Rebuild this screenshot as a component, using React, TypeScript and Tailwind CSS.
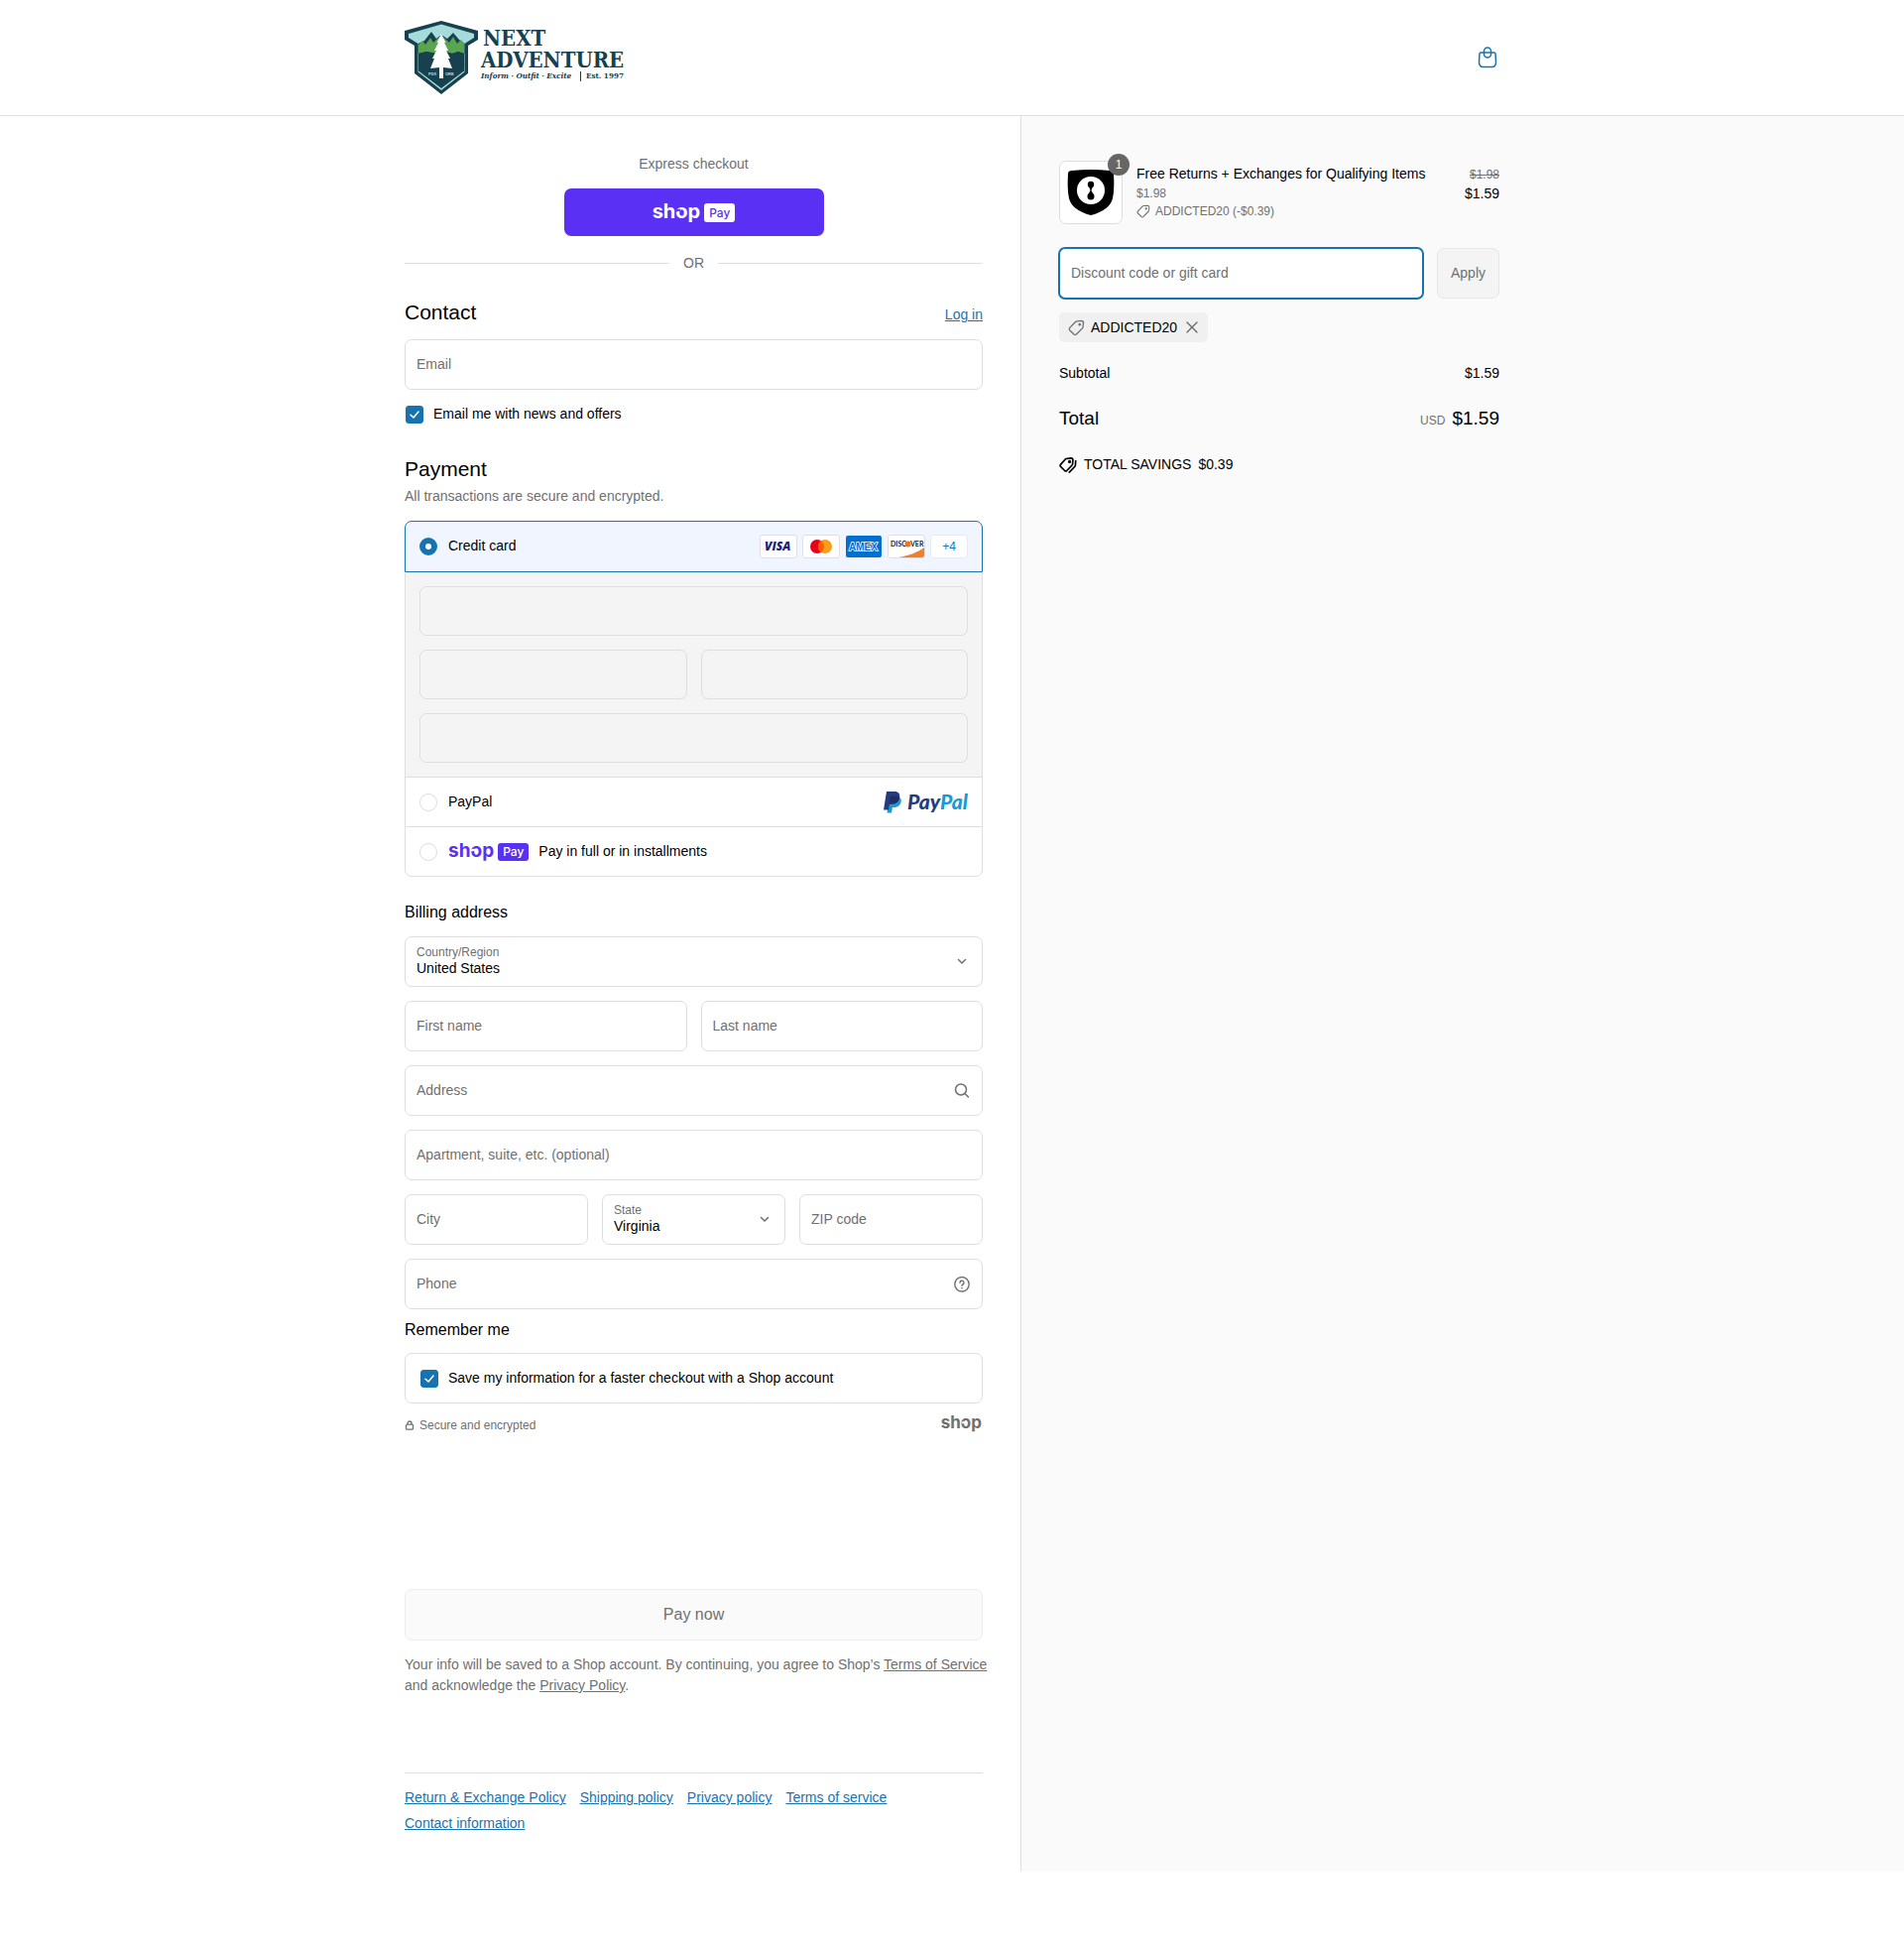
import { useState, type ReactNode } from "react";

/* ── logos ── */
function StoreLogo() {
  return (
    <svg width="222" height="76" viewBox="0 0 222 76" role="img" aria-label="Next Adventure">
      <path
        d="M0 11 L37 1 L74 11 V20 L64 26 V54 L37 75 L10 54 V26 L0 20 Z"
        fill="#17414e"
      />
      <path
        d="M4 14 L37 4.5 L70 14 V18 L60.5 24 V52.5 L37 71 L13.5 52.5 V24 L4 18 Z"
        fill="#a5dcdb"
      />
      <path
        d="M13.5 24 L20 21 L27 12 L32 19 L37 15 L43 19 L49 13 L55 20 L60.5 24 V34 H13.5 Z"
        fill="#17414e"
      />
      <path
        d="M14 25 L18 21 L21 25 L26 18 L29 23 L33 19 L37 16 L41 19 L45 23 L49 17 L53 24 L57 20 L60 24 V34 L54 32 L48 34 L41 32 L32 34 L22 32 L14 34 Z"
        fill="#5aa64e"
      />
      <path d="M14 34 L22 32 L32 34 L41 32 L48 34 L54 32 L60 34 V51.5 L37 69 L14 51.5 Z" fill="#17414e" />
      <path
        d="M37 14 L41.5 23 L40 23 L44 31 L42 31 L46 39 L44 39 L48 49 L39 48 V59 H35 V48 L26 49 L30 39 L28 39 L32 31 L30 31 L34 23 L32.500 23 Z"
        fill="#fff"
      />
      <g fill="#c9dddd" fontFamily="Liberation Sans" fontWeight="700" fontSize="4">
        <text x="24" y="56">PDX</text>
        <text x="41" y="56">ORE</text>
      </g>
      <g fill="#17414e" fontFamily="'DejaVu Serif Condensed', 'DejaVu Serif', serif" fontWeight="700">
        <text x="79" y="26" fontSize="22">NEXT</text>
        <text x="77" y="48" fontSize="22">ADVENTURE</text>
        <text x="183" y="59" fontSize="8">Est. 1997</text>
        <text x="77" y="59" fontSize="8" fontStyle="italic">Inform · Outfit · Excite</text>
      </g>
      <path d="M177.500 52 V62" stroke="#17414e" strokeWidth="1" />
    </svg>
  );
}

/* the o has a small cut where the stroke of the h runs into it */
function ShopWord({ notch, className = "" }: { notch: string; className?: string }) {
  return (
    <span className={`font-['Inter',sans-serif] font-bold ${className}`}>
      sh
      <span className="relative">
        o
        <span className={`absolute left-[1px] top-[45%] h-[2px] w-1 -rotate-12 ${notch}`} />
      </span>
      p
    </span>
  );
}

function ShopPayLogo({ inverted = false }: { inverted?: boolean }) {
  return (
    <span
      role="img"
      aria-label="Shop Pay"
      className={`flex items-center gap-1 ${inverted ? "text-white" : "text-[#5a31f4]"}`}
    >
      <ShopWord
        notch={inverted ? "bg-[#5a31f4]" : "bg-white"}
        className={inverted ? "pb-[3px] text-[20px] leading-5" : "pb-[2px] text-[19px] leading-5"}
      />
      <span
        className={`rounded-[3px] px-[5px] font-['Inter',sans-serif] text-[12px] font-medium ${
          inverted
            ? "bg-white leading-[19px] text-[#5a31f4]"
            : "bg-[#5a31f4] leading-[18px] text-white"
        }`}
      >
        Pay
      </span>
    </span>
  );
}

function PayPalLogo() {
  return (
    <svg width="85" height="24" viewBox="0 0 85 24" role="img" aria-label="PayPal">
      <path
        d="M6 6 H12 C17 6 18.500 8.500 17.500 12 C16.500 16 13 17 10.500 17 H9 L8 22.500 H3.500 Z"
        fill="#179bd7"
      />
      <path
        d="M3 1 H11 C15 1 17 3.500 16 7.500 C15 12 12 13.500 8.500 13.500 H6 L5 19.500 H0 Z"
        fill="#253b80"
      />
      <path d="M6.500 6.500 C10 5.500 14 5.500 16.200 6.500 C15.200 12 12 13.500 8.500 13.500 H5.500 Z" fill="#222d65" />
      <g fontFamily="Lato" fontWeight="900" fontStyle="italic" fontSize="21">
        <text x="24" y="19" fill="#253b80">
          Pay<tspan fill="#179bd7">Pal</tspan>
        </text>
      </g>
    </svg>
  );
}

/* ── accepted cards ── */
function CardFrame({ label, children }: { label: string; children: ReactNode }) {
  return (
    <svg width="38" height="24" viewBox="0 0 38 24" role="img" aria-label={label}>
      <rect x="0.500" y="0.500" width="37" height="23" rx="2.500" fill="#fff" stroke="#dddfe5" />
      {children}
    </svg>
  );
}

function CardIcons() {
  return (
    <div className="flex items-center gap-[5px]">
      <CardFrame label="Visa">
        <text x="5" y="16" fontFamily="Open Sans" fontWeight="800" fontStyle="italic" fontSize="12" fill="#1a1f71">
          VISA
        </text>
      </CardFrame>
      <CardFrame label="Mastercard">
        <circle cx="15" cy="12" r="7" fill="#eb001b" />
        <circle cx="23" cy="12" r="7" fill="#f79e1b" />
        <path d="M19 6.300 A7 7 0 0 1 19 17.700 A7 7 0 0 1 19 6.300" fill="#ff5f00" />
      </CardFrame>
      <svg width="38" height="24" viewBox="0 0 38 24" role="img" aria-label="American Express">
        <rect x="1" y="1" width="36" height="22" rx="2" fill="#006fcf" />
        <text
          x="4"
          y="16"
          fontFamily="Liberation Sans"
          fontWeight="700"
          fontSize="10"
          fill="#006fcf"
          stroke="#fff"
          strokeWidth="1.500"
          paintOrder="stroke"
        >
          AMEX
        </text>
      </svg>
      <CardFrame label="Discover">
        <path d="M11 23 C22 21 30 18 37 13 V21 Q37 23 35 23 Z" fill="#f0812a" />
        <g fontFamily="Lato" fontWeight="700" fontSize="7" fill="#231f20">
          <text x="3" y="12">DISC</text>
          <text x="23" y="12">VER</text>
        </g>
        <circle cx="20.500" cy="9.500" r="3" fill="#ee7623" />
      </CardFrame>
      <span className="flex h-6 w-[38px] items-center justify-center rounded-[3px] border border-[#e6eaf3] bg-white text-xs text-[#1773b0]">
        +4
      </span>
    </div>
  );
}

/* ── icons ── */
function TagIcon({ size = 14, double = false }: { size?: number; double?: boolean }) {
  return (
    <svg
      width={size}
      height={size}
      viewBox="0 0 14 14"
      fill="none"
      stroke="currentColor"
      strokeWidth={double ? 1.3 : 1.1}
      strokeLinejoin="round"
      strokeLinecap="round"
      className="shrink-0"
    >
      {double ? (
        <>
          <path d="M6 1.800 L9.500 1.500 Q10.800 1.500 10.800 2.800 L10.600 6 Q10.500 6.700 10 7.200 L6 11.300 Q5.200 12 4.400 11.300 L1.200 8.100 Q.5 7.300 1.200 6.500 L4.900 2.300 Q5.400 1.800 6 1.800 Z" />
          <path d="M13 3.500 L12.800 7 Q12.700 7.700 12.200 8.200 L8 12.600" />
          <circle cx="8.200" cy="4.200" r=".6" fill="currentColor" />
        </>
      ) : (
        <>
          <path d="M7.500 1.500 L11 1.200 Q12.800 1.200 12.800 2.800 L12.500 6 Q12.400 6.900 11.800 7.500 L7 12.400 Q5.900 13.300 4.900 12.400 L1.500 9 Q.6 8 1.500 6.900 L6 2.200 Q6.600 1.600 7.500 1.500 Z" />
          <circle cx="9.700" cy="4.300" r=".6" fill="currentColor" />
        </>
      )}
    </svg>
  );
}

function BagIcon() {
  return (
    <svg width="20" height="22" viewBox="0 0 20 22" fill="none" stroke="#1773b0" strokeWidth="1.500">
      <path d="M3.500 6 H16.500 Q18 6 18.100 7.500 L18.500 15.500 Q18.500 20.500 14.500 20.500 H5.500 Q1.500 20.500 1.500 15.500 L1.900 7.500 Q2 6 3.500 6 Z" />
      <path d="M6.500 7.500 V4.500 A3.500 3.500 0 0 1 13.500 4.500 V7.500 A3.500 3.500 0 0 1 6.500 7.500 Z" />
    </svg>
  );
}

function ProductThumb() {
  return (
    <svg width="48" height="48" viewBox="0 0 48 48" aria-hidden="true">
      <path d="M1 5 Q1 2 5 2 Q24 0 43 2 Q47 2 47 5 Q48 21 46 30 Q43 42 24 47 Q5 42 2 30 Q0 21 1 5 Z" fill="#000" />
      <circle cx="24" cy="22" r="14" fill="#fff" />
      <circle cx="24" cy="16" r="3.200" fill="#000" />
      <circle cx="24" cy="28" r="3.500" fill="#000" />
      <path d="M22 18 H26 L24.500 22 L26.500 26 H21.500 L23.500 22 Z" fill="#000" />
    </svg>
  );
}

/* ── form controls ── */
function Field({ label, icon }: { label: string; icon?: ReactNode }) {
  return (
    <label className="flex h-[51px] min-w-0 items-center rounded-[7px] border border-[#dedede] bg-white px-[11px]">
      <input
        aria-label={label}
        placeholder={label}
        className="w-full min-w-0 bg-transparent pb-[2px] text-sm text-black outline-none placeholder:text-[#707070]"
      />
      {icon}
    </label>
  );
}

function SelectField({ label, value }: { label: string; value: string }) {
  return (
    <label className="relative flex h-[51px] min-w-0 flex-col rounded-[7px] border border-[#dedede] bg-white px-[11px] pt-[7px]">
      <span className="text-xs leading-4 text-[#707070]">{label}</span>
      <select className="w-full appearance-none bg-transparent text-sm leading-4 text-black outline-none">
        <option>{value}</option>
      </select>
      <svg
        width="10"
        height="10"
        viewBox="0 0 10 10"
        fill="none"
        className="pointer-events-none absolute right-[15px] top-[19px] text-[#707070]"
      >
        <path d="M1.500 3.500 L5 7 L8.500 3.500" stroke="currentColor" strokeWidth="1.500" strokeLinecap="round" strokeLinejoin="round" />
      </svg>
    </label>
  );
}

function Checkbox({ label }: { label: string }) {
  const [checked, setChecked] = useState(true);
  return (
    <label className="flex items-center gap-[10px] text-sm text-black">
      <span className="relative flex h-[18px] w-[18px]">
        <input
          type="checkbox"
          checked={checked}
          onChange={(e) => setChecked(e.target.checked)}
          className="h-[18px] w-[18px] appearance-none rounded-[3px] border border-[#dedede] bg-white checked:border-[#1773b0] checked:bg-[#1773b0]"
        />
        {checked && (
          <svg width="10" height="10" viewBox="0 0 10 10" fill="none" className="pointer-events-none absolute left-1 top-1">
            <path d="M1 5.200 L4 8 L9 2" stroke="white" strokeWidth="1.500" strokeLinecap="round" strokeLinejoin="round" />
          </svg>
        )}
      </span>
      <span className="pb-[2px]">{label}</span>
    </label>
  );
}

function PaymentRadio({
  id,
  value,
  onSelect,
}: {
  id: string;
  value: string;
  onSelect: (id: string) => void;
}) {
  return (
    <input
      type="radio"
      id={id}
      name="payment"
      checked={value === id}
      onChange={() => onSelect(id)}
      className="h-[18px] w-[18px] shrink-0 appearance-none rounded-full border border-[#dedede] bg-white checked:border-[6px] checked:border-[#1773b0]"
    />
  );
}

const policies = [
  "Return & Exchange Policy",
  "Shipping policy",
  "Privacy policy",
  "Terms of service",
  "Contact information",
];

function Payment() {
  const [method, setMethod] = useState("card");
  return (
    <div className="mt-[14px] rounded-[7px] bg-white">
      <div className="flex h-[52px] items-center rounded-t-[7px] border border-[#1773b0] bg-[#f0f5ff] px-[14px]">
        <PaymentRadio id="card" value={method} onSelect={setMethod} />
        <label htmlFor="card" className="ml-[11px] flex-1 pb-[2px] text-sm">
          Credit card
        </label>
        <CardIcons />
      </div>
      <div className="grid grid-cols-2 gap-[14px] border-x border-[#dedede] bg-[#f4f4f4] px-[14px] py-[14px]">
        <div className="col-span-2 h-[50px] rounded-[7px] border border-[#dedede]" />
        <div className="h-[50px] rounded-[7px] border border-[#dedede]" />
        <div className="h-[50px] rounded-[7px] border border-[#dedede]" />
        <div className="col-span-2 h-[50px] rounded-[7px] border border-[#dedede]" />
      </div>
      <div className="flex h-[50px] items-center border-x border-t border-[#dedede] px-[14px]">
        <PaymentRadio id="paypal" value={method} onSelect={setMethod} />
        <label htmlFor="paypal" className="ml-[11px] flex-1 pb-[2px] text-sm">
          PayPal
        </label>
        <PayPalLogo />
      </div>
      <div className="flex h-[51px] items-center rounded-b-[7px] border border-[#dedede] px-[14px]">
        <PaymentRadio id="shop" value={method} onSelect={setMethod} />
        <label htmlFor="shop" className="ml-[11px] flex items-center gap-[10px] text-sm">
          <ShopPayLogo />
          <span className="pb-[2px]">Pay in full or in installments</span>
        </label>
      </div>
    </div>
  );
}

function OrderSummary() {
  return (
    <aside className="flex-1 border-l border-[#dedede] bg-[#fafafa]">
      <div className="max-w-[482px] pl-[38px] pt-[45px] text-sm text-black">
        <div className="flex items-center">
          <div className="relative flex h-16 w-16 shrink-0 items-center justify-center rounded-[7px] border border-[#dedede] bg-white">
            <ProductThumb />
            <span className="absolute -right-2 -top-2 flex h-[22px] w-[22px] items-center justify-center rounded-full bg-[#666666] text-xs text-white">
              1
            </span>
          </div>
          <div className="ml-[14px] flex-1 pb-[2px]">
            <p className="leading-[21px]">Free Returns + Exchanges for Qualifying Items</p>
            <p className="text-xs leading-[18px] text-[#707070]">$1.98</p>
            <p className="flex items-center gap-[5px] text-xs leading-[18px] text-[#707070]">
              <TagIcon />
              ADDICTED20 (-$0.39)
            </p>
          </div>
          <div className="self-start pt-1 text-right">
            <s className="block text-xs leading-5 text-[#707070]">$1.98</s>
            <p className="leading-[18px]">$1.59</p>
          </div>
        </div>

        <form className="-ml-px mt-[23px] flex items-center gap-[13px]" onSubmit={(e) => e.preventDefault()}>
          <input
            aria-label="Discount code or gift card"
            placeholder="Discount code or gift card"
            className="h-[53px] min-w-0 flex-1 rounded-[7px] border-2 border-[#1773b0] bg-white px-[11px] pb-[2px] text-sm outline-none placeholder:text-[#707070]"
          />
          <button className="h-[51px] rounded-[7px] border border-[#e6e6e6] bg-[#f4f4f4] px-[13px] pb-[2px] text-[#707070]">
            Apply
          </button>
        </form>

        <div className="mt-[13px] inline-flex h-[30px] items-center rounded-[5px] bg-[#f0f0f0] pl-[9px] pr-[10px]">
          <span className="text-[#707070]">
            <TagIcon size={17} />
          </span>
          <span className="ml-[6px]">ADDICTED20</span>
          <button aria-label="Remove ADDICTED20" className="ml-[9px] text-[#666666]">
            <svg width="12" height="12" viewBox="0 0 12 12" fill="none">
              <path d="M1 1 L11 11 M11 1 L1 11" stroke="currentColor" strokeWidth="1.300" strokeLinecap="round" />
            </svg>
          </button>
        </div>

        <div className="mt-[21px] flex justify-between leading-[21px]">
          <span>Subtotal</span>
          <span>$1.59</span>
        </div>
        <div className="mt-[21px] flex items-baseline justify-between text-[19px] leading-7">
          <strong className="font-normal">Total</strong>
          <span>
            <span className="mr-[7px] text-xs text-[#707070]">USD</span>$1.59
          </span>
        </div>
        <div className="mt-[22px] flex items-center leading-[21px]">
          <TagIcon size={18} double />
          <span className="ml-[7px]">TOTAL SAVINGS</span>
          <span className="ml-[7px]">$0.39</span>
        </div>
      </div>
    </aside>
  );
}

export default function App() {
  return (
    <div className="bg-white font-['Liberation_Sans',Arial,sans-serif] text-black">
      <header className="border-b border-[#dedede]">
        <div className="mx-auto flex h-[116px] max-w-[1104px] items-center justify-between">
          <a href="#">
            <StoreLogo />
          </a>
          <a href="#" aria-label="Cart" className="mr-[2px]">
            <BagIcon />
          </a>
        </div>
      </header>

      <div className="flex">
        <main className="flex w-[calc(50%+69px)] justify-end pb-[38px] pr-[38px] pt-[38px]">
          <div className="w-full max-w-[583px]">
            <p className="text-center text-sm leading-[21px] text-[#707070]">Express checkout</p>
            <button className="mx-auto mt-[14px] flex h-12 w-[262px] items-center justify-center rounded-[7px] bg-[#5a31f4]">
              <ShopPayLogo inverted />
            </button>
            <div className="mt-[17px] flex items-center gap-[14px] text-sm leading-[21px] text-[#707070]">
              <span className="h-px flex-1 bg-[#dedede]" />
              OR
              <span className="h-px flex-1 bg-[#dedede]" />
            </div>

            <div className="mt-[25px] flex items-baseline justify-between">
              <h2 className="text-[21px] leading-7">Contact</h2>
              <a href="#" className="text-sm text-[#1773b0] underline">
                Log in
              </a>
            </div>
            <div className="mt-[13px]">
              <Field label="Email" />
            </div>
            <div className="mt-[14px] pl-px">
              <Checkbox label="Email me with news and offers" />
            </div>

            <h2 className="mt-[30px] text-[21px] leading-7">Payment</h2>
            <p className="mt-[3px] text-sm leading-[21px] text-[#707070]">All transactions are secure and encrypted.</p>
            <Payment />

            <h3 className="mt-[24px] text-base leading-6">Billing address</h3>
            <div className="mt-[12px] flex flex-col gap-[14px]">
              <SelectField label="Country/Region" value="United States" />
              <div className="grid grid-cols-2 gap-[14px]">
                <Field label="First name" />
                <Field label="Last name" />
              </div>
              <Field
                label="Address"
                icon={
                  <svg width="16" height="16" viewBox="0 0 16 16" fill="none" className="mr-px shrink-0 text-[#707070]">
                    <circle cx="7" cy="6.500" r="5.500" stroke="currentColor" strokeWidth="1.500" />
                    <path d="M11 10.500 L14.500 14" stroke="currentColor" strokeWidth="1.500" strokeLinecap="round" />
                  </svg>
                }
              />
              <Field label="Apartment, suite, etc. (optional)" />
              <div className="grid grid-cols-3 gap-[14px]">
                <Field label="City" />
                <SelectField label="State" value="Virginia" />
                <Field label="ZIP code" />
              </div>
              <Field
                label="Phone"
                icon={
                  <svg width="16" height="16" viewBox="0 0 16 16" fill="none" stroke="currentColor" strokeWidth="1.400" className="mr-px shrink-0 text-[#707070]">
                    <circle cx="8" cy="7.800" r="7.200" />
                    <path d="M6 6.200 A2 2 0 1 1 8.800 8 Q8 8.400 8 9.300" strokeLinecap="round" />
                    <circle cx="8" cy="11.500" r=".85" fill="currentColor" stroke="none" />
                  </svg>
                }
              />
            </div>

            <h3 className="mt-[9px] text-base leading-6">Remember me</h3>
            <div className="mt-[11px] flex h-[51px] items-center rounded-[7px] border border-[#dedede] px-[15px]">
              <Checkbox label="Save my information for a faster checkout with a Shop account" />
            </div>
            <div className="mt-[9px] flex items-center justify-between text-[#707070]">
              <span className="flex items-center gap-[5px] pt-1 text-xs leading-[18px]">
                <svg width="10" height="10" viewBox="0 0 10 10" fill="none" stroke="currentColor" strokeWidth="1.300">
                  <rect x="1.500" y="4.200" width="7" height="5" rx="1" />
                  <path d="M3 4 V3 A2 2 0 0 1 7 3 V4" />
                </svg>
                Secure and encrypted
              </span>
              <ShopWord notch="bg-white" className="mr-px pb-[2px] text-[17px] leading-5" />
            </div>

            <button className="mt-[156px] h-[52px] w-full rounded-[7px] border border-[#ededed] bg-[#fafafa] text-base text-[#707070]">
              Pay now
            </button>
            <p className="-mr-4 mt-[14px] text-sm leading-[21px] text-[#707070]">
              Your info will be saved to a Shop account. By continuing, you agree to Shop’s{" "}
              <a href="#" className="underline">Terms of Service</a> and acknowledge the{" "}
              <a href="#" className="underline">Privacy Policy</a>.
            </p>

            <footer className="mt-[77px] flex flex-wrap gap-x-[14px] gap-y-[5px] border-t border-[#dedede] pr-10 pt-[14px] text-sm leading-[21px] text-[#1773b0]">
              {policies.map((name) => (
                <a key={name} href="#" className="underline">
                  {name}
                </a>
              ))}
            </footer>
          </div>
        </main>
        <OrderSummary />
      </div>
    </div>
  );
}
